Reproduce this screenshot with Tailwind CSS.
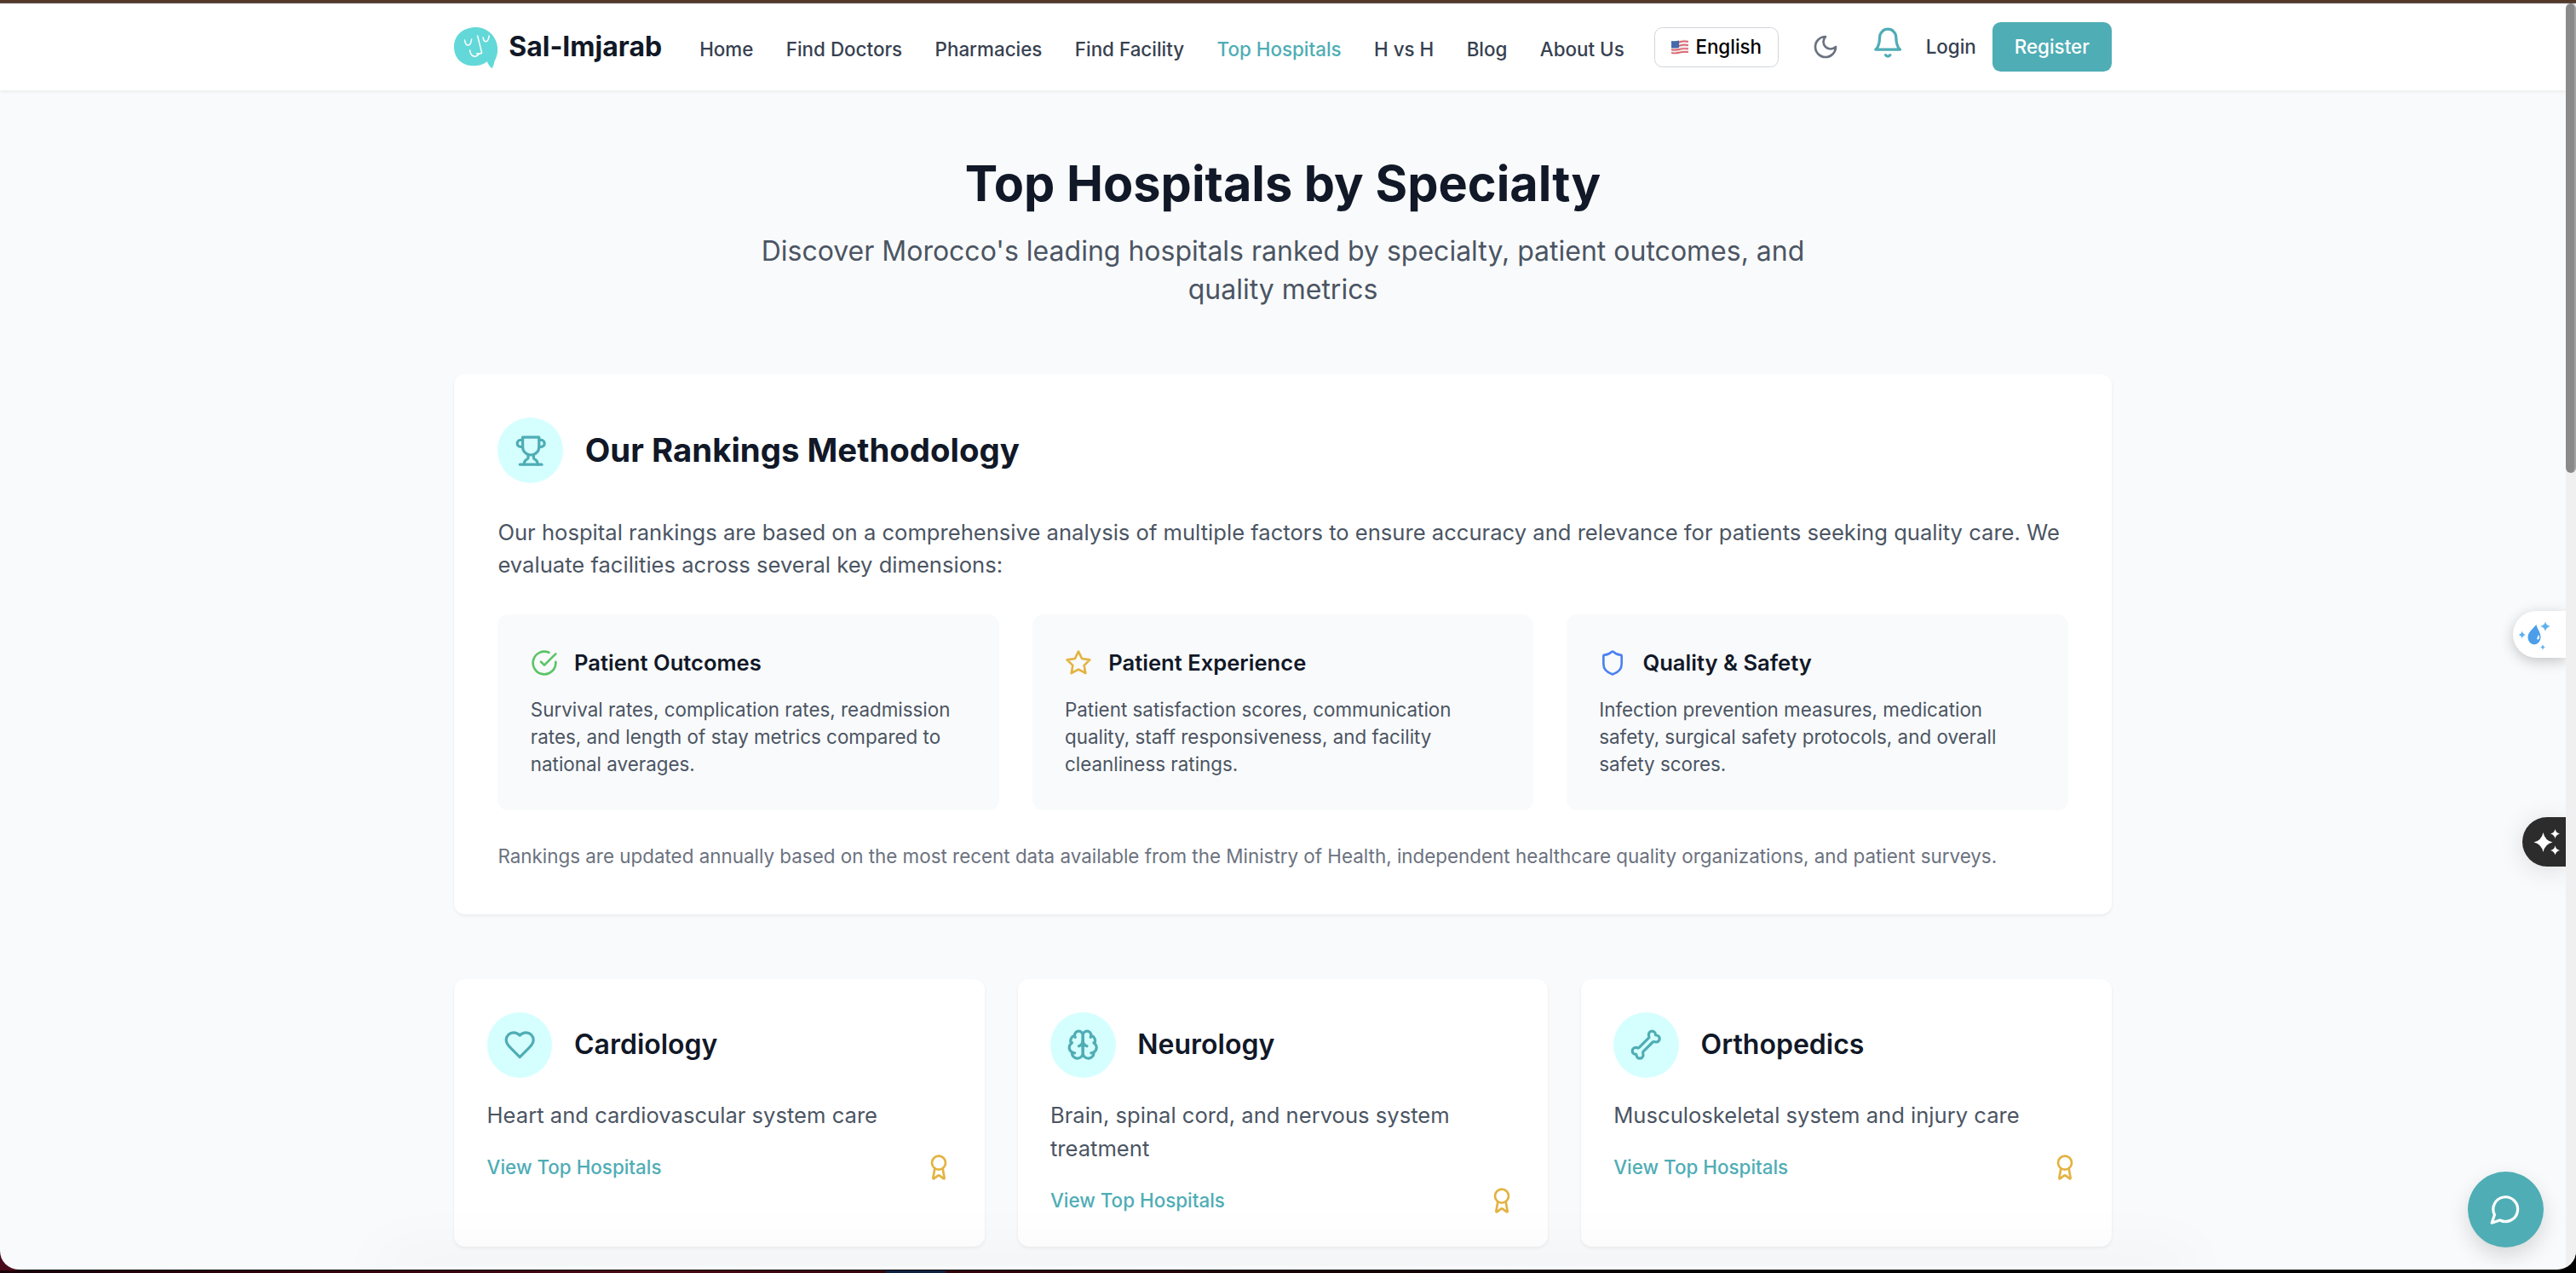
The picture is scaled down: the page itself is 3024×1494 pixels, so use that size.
<!DOCTYPE html>
<!-- root font size is 25.6px, so every rem based class is scaled by 1.6 -->
<html lang="en" class="text-[25.6px]">
<head>
    <meta charset="UTF-8">
    <meta name="viewport" content="width=device-width, initial-scale=1.0">
    <title>Sal-Imjarab - Top Hospitals by Specialty</title>
    <script src="https://cdn.jsdelivr.net/npm/@tailwindcss/browser@4"></script>
</head>
<body class="relative h-[1494px] w-[3024px] overflow-hidden bg-black pt-[4px] font-['Inter',sans-serif]">

    <!-- Desktop behind the window -->
    <div class="absolute inset-x-0 top-0 h-[30px] bg-[#553726]"></div>
    <div class="absolute inset-x-0 top-[2px] h-[30px] bg-[#54443c]"></div>
    <div class="absolute left-0 bottom-0 h-[24px] w-[20px] bg-[#4a0a1c]"></div>
    <div class="absolute left-0 bottom-0 h-[3px] w-full bg-linear-to-r from-[#1a0006] via-[#4a0a14] via-25% to-black to-80%"></div>
    <div class="absolute left-[1040px] bottom-0 h-[3px] w-[70px] bg-[#0c2340]"></div>

    <!-- Browser window -->
    <div class="relative flex h-[1486px] w-full overflow-hidden rounded-b-[22px] bg-[#f9fafb]">
        <div class="w-[3012px] shrink-0">

            <!-- Header -->
            <header class="relative h-16 bg-white shadow-[0_2px_4px_rgba(0,0,0,0.06)]">
                <div class="mx-auto flex h-full w-[1945.6px] items-center">
                    <a class="flex items-center">
                        <svg class="h-8 w-8" viewBox="0 0 51 51" fill="none">
                            <path d="M25.500 2C40 2 51 14 51 28C51 33 49.500 38 47.500 41C47 44 46 48 44 50C42 48 40 45 38.500 42C34 46 28 47 22 47C9 47 0 38 0 25C0 11 11 2 25.500 2Z" fill="#63d8d8"/>
                            <path d="M12.500 17c1 8 7 8 8-1M34 14c1 7 6 6 7-2M27.500 12l5 20c-1 1-4 1-6 1M18.500 29c1 7 6 9 10 5" stroke="#fff" stroke-width="1.500" stroke-linecap="round" stroke-linejoin="round"/>
                        </svg>
                        <span class="ml-2 text-xl font-bold text-[#111827]">Sal-Imjarab</span>
                    </a>
                    <nav class="ml-[44px] flex gap-6 pt-1 text-sm font-medium whitespace-nowrap text-[#374151]">
                        <a>Home</a>
                        <a>Find Doctors</a>
                        <a>Pharmacies</a>
                        <a>Find Facility</a>
                        <a class="text-[#4fadb5]">Top Hospitals</a>
                        <a>H vs H</a>
                        <a>Blog</a>
                        <a>About Us</a>
                    </nav>
                    <div class="ml-auto flex items-center">
                        <button class="flex h-[47px] w-[146px] items-center justify-center gap-[8px] rounded-md border border-[#d1d5db] text-sm font-medium text-black">
                            <svg class="h-[18px] w-[20px]" viewBox="0 0 21 19">
                                <path d="M0 2Q5 3 10 1.500T21 1V17Q16 16.500 11 17.500T0 18Z" fill="#f3e9ea"/>
                                <path d="M0 4q5 1 10-.5t11-.5M0 8.500q5 1 10-.5t11-.5M0 13q5 1 10-.5t11-.5M0 17q5 1 10-.5t11-.5" stroke="#d9606a" stroke-width="1.800" fill="none"/>
                                <path d="M0 2Q5 3 9.500 1.600V10.500Q5 11.500 0 11Z" fill="#4469ad"/>
                            </svg>
                            English
                        </button>
                        <svg class="ml-[39px] h-5 w-5 text-[#6b7280]" viewBox="0 0 24 24" fill="none" stroke="currentColor" stroke-width="2" stroke-linecap="round" stroke-linejoin="round"><path d="M12 3a6 6 0 0 0 9 9 9 9 0 1 1-9-9Z"/></svg>
                        <svg class="mb-[9px] ml-[38px] h-6 w-6 text-[#4fadb5]" viewBox="0 0 24 24" fill="none" stroke="currentColor" stroke-width="2" stroke-linecap="round" stroke-linejoin="round"><path d="M6 8a6 6 0 0 1 12 0c0 7 3 9 3 9H3s3-2 3-9"/><path d="M10.300 21a1.940 1.940 0 0 0 3.400 0"/></svg>
                        <a class="ml-[25px] text-sm font-medium text-[#374151]">Login</a>
                        <button class="ml-[19px] h-9 w-[140px] rounded-md bg-[#4fadb5] text-sm font-medium text-white">Register</button>
                    </div>
                </div>
            </header>

            <main class="mx-auto w-[1945.6px] py-12">
                <!-- Page title -->
                <div class="mb-12 text-center">
                    <h1 class="mb-4 text-4xl font-bold text-[#111827]">Top Hospitals by Specialty</h1>
                    <p class="mx-auto w-[1228.8px] text-xl text-[#4b5563]">Discover Morocco's leading hospitals ranked by specialty, patient outcomes, and quality metrics</p>
                </div>

                <!-- Methodology -->
                <section class="mb-12 rounded-lg bg-white p-8 shadow-[0_2px_4px_rgba(0,0,0,0.06)]">
                    <div class="mb-6 flex items-center">
                        <div class="rounded-full bg-[#d5fffe] p-3 text-[#4fadb5]">
                            <svg class="h-6 w-6" viewBox="0 0 24 24" fill="none" stroke="currentColor" stroke-width="2" stroke-linecap="round" stroke-linejoin="round"><path d="M6 9H4.500a2.500 2.500 0 0 1 0-5H6"/><path d="M18 9h1.500a2.500 2.500 0 0 0 0-5H18"/><path d="M4 22h16"/><path d="M10 14.660V17c0 .55-.47.98-.97 1.210C7.850 18.750 7 20.240 7 22"/><path d="M14 14.660V17c0 .55.47.98.97 1.210C16.150 18.750 17 20.240 17 22"/><path d="M18 2H6v7a6 6 0 0 0 12 0V2Z"/></svg>
                        </div>
                        <h2 class="ml-4 text-2xl font-bold text-[#111827]">Our Rankings Methodology</h2>
                    </div>
                    <p class="mb-6 text-base text-[#4b5563]">Our hospital rankings are based on a comprehensive analysis of multiple factors to ensure accuracy and relevance for patients seeking quality care. We evaluate facilities across several key dimensions:</p>
                    <div class="mb-6 grid grid-cols-3 gap-6">
                        <div class="rounded-lg bg-[#f9fafb] p-6">
                            <div class="mb-3 flex items-center">
                                <svg class="mr-3 h-5 w-5 text-[#5ac466]" viewBox="0 0 24 24" fill="none" stroke="currentColor" stroke-width="2" stroke-linecap="round" stroke-linejoin="round"><path d="M22 11.080V12a10 10 0 1 1-5.930-9.140"/><path d="m9 11 3 3L22 4"/></svg>
                                <h3 class="text-base font-semibold text-[#111827]">Patient Outcomes</h3>
                            </div>
                            <p class="text-sm text-[#4b5563]">Survival rates, complication rates, readmission rates, and length of stay metrics compared to national averages.</p>
                        </div>
                        <div class="rounded-lg bg-[#f9fafb] p-6">
                            <div class="mb-3 flex items-center">
                                <svg class="mr-3 h-5 w-5 text-[#e3b341]" viewBox="0 0 24 24" fill="none" stroke="currentColor" stroke-width="2" stroke-linecap="round" stroke-linejoin="round"><path d="m12 2 3.090 6.260L22 9.270l-5 4.870 1.180 6.880L12 17.770l-6.180 3.250L7 14.140 2 9.270l6.910-1.010L12 2z"/></svg>
                                <h3 class="text-base font-semibold text-[#111827]">Patient Experience</h3>
                            </div>
                            <p class="text-sm text-[#4b5563]">Patient satisfaction scores, communication quality, staff responsiveness, and facility cleanliness ratings.</p>
                        </div>
                        <div class="rounded-lg bg-[#f9fafb] p-6">
                            <div class="mb-3 flex items-center">
                                <svg class="mr-3 h-5 w-5 text-[#4b82f0]" viewBox="0 0 24 24" fill="none" stroke="currentColor" stroke-width="2" stroke-linecap="round" stroke-linejoin="round"><path d="M20 13c0 5-3.500 7.500-7.660 8.950a1 1 0 0 1-.67-.01C7.500 20.500 4 18 4 13V6a1 1 0 0 1 1-1c2 0 4.500-1.200 6.240-2.720a1.170 1.170 0 0 1 1.520 0C14.510 3.810 17 5 19 5a1 1 0 0 1 1 1z"/></svg>
                                <h3 class="text-base font-semibold text-[#111827]">Quality &amp; Safety</h3>
                            </div>
                            <p class="text-sm text-[#4b5563]">Infection prevention measures, medication safety, surgical safety protocols, and overall safety scores.</p>
                        </div>
                    </div>
                    <p class="text-sm text-[#6b7280]">Rankings are updated annually based on the most recent data available from the Ministry of Health, independent healthcare quality organizations, and patient surveys.</p>
                </section>

                <!-- Specialties -->
                <section class="grid grid-cols-3 gap-6">
                    <div class="rounded-lg bg-white p-6 shadow-[0_2px_4px_rgba(0,0,0,0.06)]">
                        <div class="mb-4 flex items-center">
                            <div class="rounded-full bg-[#d5fffe] p-3 text-[#4fadb5]">
                                <svg class="h-6 w-6" viewBox="0 0 24 24" fill="none" stroke="currentColor" stroke-width="2" stroke-linecap="round" stroke-linejoin="round"><path d="M19 14c1.490-1.460 3-3.210 3-5.500A5.500 5.500 0 0 0 16.500 3c-1.760 0-3 .5-4.500 2-1.500-1.500-2.740-2-4.500-2A5.500 5.500 0 0 0 2 8.500c0 2.300 1.500 4.050 3 5.500l7 7Z"/></svg>
                            </div>
                            <h3 class="ml-4 text-xl font-semibold text-[#111827]">Cardiology</h3>
                        </div>
                        <p class="mb-4 text-base text-[#4b5563]">Heart and cardiovascular system care</p>
                        <div class="flex items-center justify-between">
                            <a class="text-sm font-medium text-[#4fadb5]">View Top Hospitals</a>
                            <svg class="h-5 w-5 text-[#e3b341]" viewBox="0 0 24 24" fill="none" stroke="currentColor" stroke-width="2" stroke-linecap="round" stroke-linejoin="round"><path d="m15.477 12.890 1.515 8.526a.5.5 0 0 1-.81.47l-3.580-2.687a1 1 0 0 0-1.197 0l-3.586 2.686a.5.5 0 0 1-.81-.469l1.514-8.526"/><circle cx="12" cy="8" r="6"/></svg>
                        </div>
                    </div>
                    <div class="rounded-lg bg-white p-6 shadow-[0_2px_4px_rgba(0,0,0,0.06)]">
                        <div class="mb-4 flex items-center">
                            <div class="rounded-full bg-[#d5fffe] p-3 text-[#4fadb5]">
                                <svg class="h-6 w-6" viewBox="0 0 24 24" fill="none" stroke="currentColor" stroke-width="2" stroke-linecap="round" stroke-linejoin="round"><path d="M12 5a3 3 0 1 0-5.997.125 4 4 0 0 0-2.526 5.770 4 4 0 0 0 .556 6.588A4 4 0 1 0 12 18Z"/><path d="M12 5a3 3 0 1 1 5.997.125 4 4 0 0 1 2.526 5.770 4 4 0 0 1-.556 6.588A4 4 0 1 1 12 18Z"/><path d="M15 13a4.500 4.500 0 0 1-3-4 4.500 4.500 0 0 1-3 4"/><path d="M17.599 6.500a3 3 0 0 0 .399-1.375"/><path d="M6.003 5.125A3 3 0 0 0 6.401 6.500"/><path d="M3.477 10.896a4 4 0 0 1 .585-.396"/><path d="M19.938 10.500a4 4 0 0 1 .585.396"/><path d="M6 18a4 4 0 0 1-1.967-.516"/><path d="M19.967 17.484A4 4 0 0 1 18 18"/></svg>
                            </div>
                            <h3 class="ml-4 text-xl font-semibold text-[#111827]">Neurology</h3>
                        </div>
                        <p class="mb-4 text-base text-[#4b5563]">Brain, spinal cord, and nervous system treatment</p>
                        <div class="flex items-center justify-between">
                            <a class="text-sm font-medium text-[#4fadb5]">View Top Hospitals</a>
                            <svg class="h-5 w-5 text-[#e3b341]" viewBox="0 0 24 24" fill="none" stroke="currentColor" stroke-width="2" stroke-linecap="round" stroke-linejoin="round"><path d="m15.477 12.890 1.515 8.526a.5.5 0 0 1-.81.47l-3.580-2.687a1 1 0 0 0-1.197 0l-3.586 2.686a.5.5 0 0 1-.81-.469l1.514-8.526"/><circle cx="12" cy="8" r="6"/></svg>
                        </div>
                    </div>
                    <div class="rounded-lg bg-white p-6 shadow-[0_2px_4px_rgba(0,0,0,0.06)]">
                        <div class="mb-4 flex items-center">
                            <div class="rounded-full bg-[#d5fffe] p-3 text-[#4fadb5]">
                                <svg class="h-6 w-6" viewBox="0 0 24 24" fill="none" stroke="currentColor" stroke-width="2" stroke-linecap="round" stroke-linejoin="round"><path d="M17 10c.7-.7 1.690 0 2.500 0a2.500 2.500 0 1 0 0-5 .5.5 0 0 1-.5-.5 2.500 2.500 0 1 0-5 0c0 .81.7 1.800 0 2.500l-7 7c-.7.7-1.690 0-2.500 0a2.500 2.500 0 0 0 0 5c.28 0 .5.22.5.5a2.500 2.500 0 1 0 5 0c0-.81-.7-1.800 0-2.500Z"/></svg>
                            </div>
                            <h3 class="ml-4 text-xl font-semibold text-[#111827]">Orthopedics</h3>
                        </div>
                        <p class="mb-4 text-base text-[#4b5563]">Musculoskeletal system and injury care</p>
                        <div class="flex items-center justify-between">
                            <a class="text-sm font-medium text-[#4fadb5]">View Top Hospitals</a>
                            <svg class="h-5 w-5 text-[#e3b341]" viewBox="0 0 24 24" fill="none" stroke="currentColor" stroke-width="2" stroke-linecap="round" stroke-linejoin="round"><path d="m15.477 12.890 1.515 8.526a.5.5 0 0 1-.81.47l-3.580-2.687a1 1 0 0 0-1.197 0l-3.586 2.686a.5.5 0 0 1-.81-.469l1.514-8.526"/><circle cx="12" cy="8" r="6"/></svg>
                        </div>
                    </div>
                </section>
            </main>
        </div>

        <!-- Scrollbar -->
        <div class="z-10 w-[12px] shrink-0 bg-[#f0f0f0]">
            <div class="h-[551px] w-[12px] rounded-full border-r-2 border-[#a3a3a3] bg-[#8a8a8a]"></div>
        </div>

        <!-- Soft shade along the bottom edge -->
        <div class="absolute bottom-0 left-[460px] h-[4px] w-[2100px] shadow-[0_0_70px_16px_rgba(0,0,0,0.045)]"></div>

        <!-- Side tabs -->
        <div class="absolute top-[713px] left-[2950px] h-[55px] w-[62px] rounded-l-full bg-white shadow-[0_4px_16px_rgba(0,0,0,0.22)]">
            <svg class="h-[55px] w-[62px]" viewBox="0 0 62 55">
                <path d="M27.500 16c.5 5 5 8 5 15a7.500 8.500 0 0 1-15 0c0-6 5-9 10-15Z" fill="#4c9eeb"/>
                <path d="M30 28c2 3 1 6-1.500 5.500-1-1.500.5-3 1.500-5.500Z" fill="#fff"/>
                <path d="M38 12.500q1 4.500 6 5.500-5 1-6 6-1-5-6-6 5-1 6-5.500ZM10.700 23.500q.8 3.800 4.500 4.500-3.700.7-4.500 4.500-.8-3.800-4.500-4.500 3.700-.7 4.500-4.500ZM35 39.500q.5 2.500 3 3-2.500.5-3 3-.5-2.500-3-3 2.500-.5 3-3Z" fill="#5fb1ee"/>
            </svg>
        </div>
        <div class="absolute top-[955px] left-[2961px] h-[58px] w-[51px] rounded-l-full bg-[#2c2c2c] shadow-[0_4px_30px_rgba(0,0,0,0.12)]">
            <svg class="h-[58px] w-[51px]" viewBox="0 0 51 58" fill="#fff">
                <path d="M24.500 18q2 9.500 11 11.500-9 2-11 11.500-2-9.500-11-11.500 9-2 11-11.500ZM38.500 14q1 4.500 5.500 5.500-4.500 1-5.500 5.500-1-4.500-5.500-5.500 4.500-1 5.500-5.500ZM38.500 33.500q1 4.500 5.500 5.500-4.500 1-5.500 5.500-1-4.500-5.500-5.500 4.500-1 5.500-5.500Z"/>
            </svg>
        </div>

        <!-- Chat button -->
        <button class="absolute top-[1371px] left-[2897px] flex h-[89px] w-[89px] items-center justify-center rounded-full bg-[#4fadb5] text-white shadow-[0_10px_24px_rgba(0,0,0,0.14)]">
            <svg class="h-6 w-6" viewBox="0 0 24 24" fill="none" stroke="currentColor" stroke-width="2" stroke-linecap="round" stroke-linejoin="round"><path d="M7.900 20A9 9 0 1 0 4 16.100L2 22Z"/></svg>
        </button>
    </div>
</body>
</html>
